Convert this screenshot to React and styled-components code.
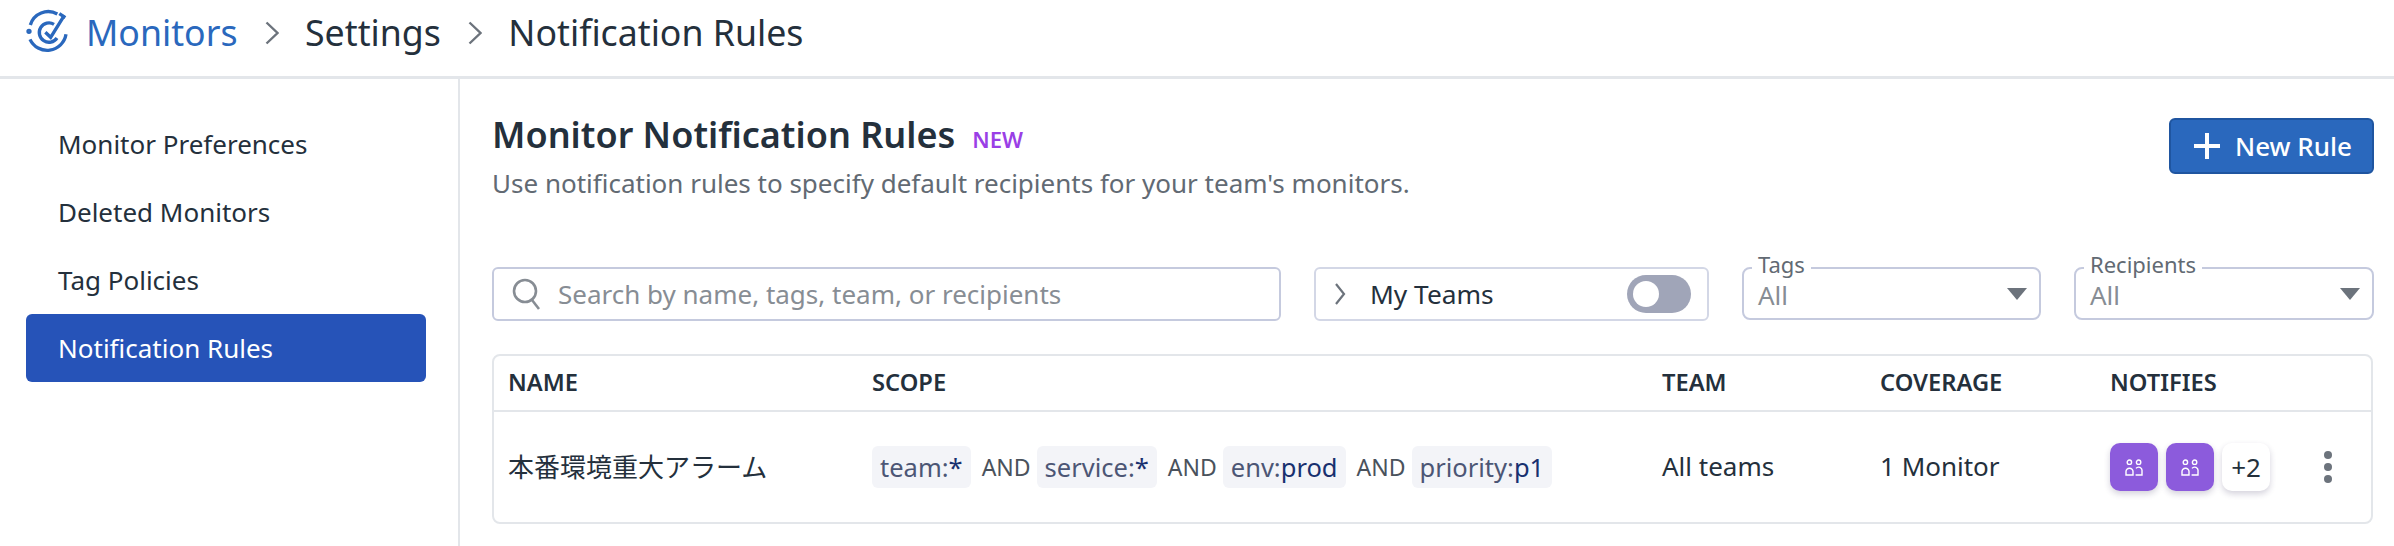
import React from 'react';
import styled, { createGlobalStyle } from 'styled-components';

const GlobalStyle = createGlobalStyle`
    html, body {
        margin: 0;
        padding: 0;
        background: #fff;
    }
    body {
        font-family: "Noto Sans", "Noto Sans CJK JP", sans-serif;
        color: #24303c;
    }
    * {
        box-sizing: border-box;
    }
`;

const Page = styled.div`
    width: 2394px;
    height: 546px;
    overflow: hidden;
    display: flex;
    flex-direction: column;
`;

const Header = styled.header`
    height: 79px;
    flex: none;
    display: flex;
    align-items: center;
    padding: 0 0 12px 20px;
    border-bottom: 3px solid #e3e6ea;
    font-size: 35.7px;
`;

const Crumb = styled.span`
    color: ${(p) => (p.$link ? '#2a68bd' : '#24303c')};
    margin-left: ${(p) => (p.$link ? '12px' : '0')};
`;

const CrumbSep = styled.svg`
    width: 14px;
    height: 24px;
    margin: 2px 26px 0 27.5px;
    fill: none;
    stroke: #6c737c;
    stroke-width: 2.4;
`;

const Body = styled.div`
    flex: 1;
    display: flex;
`;

const Sidebar = styled.nav`
    width: 460px;
    flex: none;
    padding: 31px 32px 0 26px;
    border-right: 2px solid #e3e6ea;
    display: flex;
    flex-direction: column;
`;

const NavItem = styled.a`
    height: 68px;
    padding-left: 32px;
    display: flex;
    align-items: center;
    border-radius: 6px;
    font-size: 26px;
    color: ${(p) => (p.$active ? '#fff' : '#24303c')};
    background: ${(p) => (p.$active ? '#2653b8' : 'transparent')};
`;

const Main = styled.main`
    flex: 1;
    padding: 39px 20px 0 32px;
`;

const TitleRow = styled.div`
    display: flex;
    justify-content: space-between;
    align-items: flex-start;
    height: 149px;
`;

const TitleBlock = styled.div`
    display: flex;
    flex-direction: column;
`;

const Title = styled.h1`
    margin: 0;
    font-size: 36px;
    line-height: 34px;
    font-weight: 600;
    display: flex;
    align-items: baseline;
`;

const NewTag = styled.span`
    margin-left: 17px;
    color: #9a3fe6;
    font-size: 22px;
    font-weight: 600;
`;

const Subtitle = styled.p`
    margin: 10px 0 0;
    font-size: 26px;
    line-height: 34px;
    color: #626a73;
`;

const NewButton = styled.button`
    width: 205px;
    height: 56px;
    border: 2px solid #1f55a0;
    border-radius: 6px;
    background: #2a68bd;
    color: #fff;
    display: flex;
    align-items: center;
    justify-content: center;
    gap: 14px;
    font: 500 26px "Noto Sans", sans-serif;
    padding: 0 0 0 2px;
`;

const Filters = styled.div`
    display: flex;
    align-items: flex-start;
    height: 87px;
`;

const SearchBox = styled.div`
    width: 789px;
    height: 54px;
    border: 2px solid #c5cade;
    border-radius: 6px;
    display: flex;
    align-items: center;
    padding-left: 18px;
    gap: 16px;
    font-size: 26px;
    color: #878d94;
`;

const TeamsBox = styled.div`
    width: 395px;
    height: 54px;
    margin-left: 33px;
    border: 2px solid #d3d7e6;
    border-radius: 6px;
    display: flex;
    align-items: center;
    padding: 0 16px 0 18px;
    font-size: 26.3px;
`;

const TeamsLabel = styled.span`
    margin-left: 24px;
    flex: 1;
`;

const Toggle = styled.span`
    width: 64px;
    height: 38px;
    border-radius: 19px;
    background: #a0a5b8;
    display: flex;
    align-items: center;
    padding-left: 6px;
`;

const Knob = styled.span`
    width: 26px;
    height: 26px;
    border-radius: 50%;
    background: #fff;
`;

const SelectBox = styled.div`
    position: relative;
    width: ${(p) => p.$width}px;
    height: 53px;
    margin-left: 33px;
    border: 2px solid #c5cade;
    border-radius: 8px;
    display: flex;
    align-items: center;
    justify-content: space-between;
    padding: 2px 12px 0 14px;
    font-size: 26px;
    color: #878d94;
`;

const SelectLabel = styled.span`
    position: absolute;
    top: -18px;
    left: 8px;
    padding: 0 6px;
    background: linear-gradient(to bottom, transparent 16px, #fff 16px);
    font-size: 22px;
    line-height: 26px;
    color: #626a73;
`;

const Caret = styled.span`
    width: 0;
    height: 0;
    border-left: 10px solid transparent;
    border-right: 10px solid transparent;
    border-top: 12px solid #6c737c;
    margin-top: -2px;
`;

const Table = styled.div`
    width: 1881px;
    height: 170px;
    border: 2px solid #e3e6ea;
    border-radius: 8px;
`;

const Columns = `
    display: grid;
    grid-template-columns: 364px 790px 218px 230px 1fr;
    padding-left: 14px;
    align-items: center;
`;

const HeadRow = styled.div`
    ${Columns}
    height: 56px;
    padding-bottom: 2px;
    border-bottom: 2px solid #e3e6ea;
    font-size: 23.7px;
    font-weight: 600;
`;

const DataRow = styled.div`
    ${Columns}
    height: 110px;
    font-size: 26px;
`;

const RowText = styled.span`
    margin-top: -2px;
`;

const Scope = styled.div`
    display: flex;
    align-items: center;
    font-size: 25.5px;
`;

const Chip = styled.span`
    height: 42px;
    display: flex;
    align-items: center;
    padding: 0 8px;
    border-radius: 6px;
    background: #f3f4f8;
    color: #4c5675;
`;

const ChipValue = styled.span`
    color: #18306f;
`;

const AndWord = styled.span`
    margin: 0 6px 0 11px;
    font-size: 23px;
    color: #4a525c;
`;

const Notifies = styled.div`
    display: flex;
    align-items: center;
    gap: 8px;
`;

const Avatar = styled.span`
    width: 48px;
    height: 48px;
    border-radius: 10px;
    background: #8c5bdc;
    box-shadow: 0 3px 6px rgba(40, 30, 80, 0.2);
    display: flex;
    align-items: center;
    justify-content: center;
`;

const MoreCount = styled(Avatar)`
    background: #fff;
    color: #24303c;
    font-size: 26px;
`;

const Kebab = styled.span`
    margin-left: 46px;
    display: flex;
    flex-direction: column;
    gap: 4px;
`;

const Dot = styled.span`
    width: 8px;
    height: 8px;
    border-radius: 50%;
    background: #6c737c;
`;

const TeamIcon = () => (
    <svg width="18" height="17" viewBox="0 0 18 17" fill="none" stroke="#fff" strokeWidth="1.4">
        <circle cx="4.4" cy="3.2" r="2.2" />
        <circle cx="13.6" cy="3.2" r="2.2" />
        <path d="M1 16v-3.4a3.4 3.4 0 0 1 3.4-3.4h.2a3.4 3.4 0 0 1 3.4 3.4V16z" />
        <path d="M11 9.4a3.4 3.4 0 0 1 6 2.6V16h-6.4" />
    </svg>
);

const MonitorsLogo = () => (
    <svg width="54" height="54" viewBox="0 0 162 162" fill="none" stroke="#2a68bd" strokeWidth="10">
        <path d="M31 60A56 56 0 0 1 112 27" />
        <path d="M30 103A57 57 0 0 0 138 88" />
        <path d="M102 58A29 29 0 1 0 111 99" />
        <path d="M76 82l16 15L133 31" />
        <path d="M118 26l18 12" />
        <circle cx="27" cy="79" r="3" fill="#2a68bd" />
    </svg>
);

const Chevron = () => (
    <CrumbSep viewBox="0 0 14 24">
        <path d="M1.5 1.5l11 10.5-11 10.5" />
    </CrumbSep>
);

const nav = ['Monitor Preferences', 'Deleted Monitors', 'Tag Policies', 'Notification Rules'];

const scope = [
    ['team:', '*'],
    ['service:', '*'],
    ['env:', 'prod'],
    ['priority:', 'p1']
];

const App = () => (
    <Page>
        <GlobalStyle />
        <Header>
            <MonitorsLogo />
            <Crumb $link>Monitors</Crumb>
            <Chevron />
            <Crumb>Settings</Crumb>
            <Chevron />
            <Crumb>Notification Rules</Crumb>
        </Header>
        <Body>
            <Sidebar>
                {nav.map((item) => (
                    <NavItem key={item} $active={item === 'Notification Rules'}>
                        {item}
                    </NavItem>
                ))}
            </Sidebar>
            <Main>
                <TitleRow>
                    <TitleBlock>
                        <Title>
                            Monitor Notification Rules
                            <NewTag>NEW</NewTag>
                        </Title>
                        <Subtitle>Use notification rules to specify default recipients for your team's monitors.</Subtitle>
                    </TitleBlock>
                    <NewButton>
                        <svg width="28" height="28" viewBox="0 0 28 28" fill="#fff">
                            <path d="M12 1h4v11h11v4H16v11h-4V16H1v-4h11z" />
                        </svg>
                        New Rule
                    </NewButton>
                </TitleRow>
                <Filters>
                    <SearchBox>
                        <svg width="30" height="32" viewBox="0 0 30 32" fill="none" stroke="#878d94" strokeWidth="2.6">
                            <circle cx="13" cy="13" r="11" />
                            <path d="M20 22l7 9" />
                        </svg>
                        Search by name, tags, team, or recipients
                    </SearchBox>
                    <TeamsBox>
                        <svg width="12" height="24" viewBox="0 0 12 24" fill="none" stroke="#6c737c" strokeWidth="2.2">
                            <path d="M2 2l8 10L2 22" />
                        </svg>
                        <TeamsLabel>My Teams</TeamsLabel>
                        <Toggle>
                            <Knob />
                        </Toggle>
                    </TeamsBox>
                    <SelectBox $width={299}>
                        <SelectLabel>Tags</SelectLabel>
                        All
                        <Caret />
                    </SelectBox>
                    <SelectBox $width={300}>
                        <SelectLabel>Recipients</SelectLabel>
                        All
                        <Caret />
                    </SelectBox>
                </Filters>
                <Table>
                    <HeadRow>
                        <span>NAME</span>
                        <span>SCOPE</span>
                        <span>TEAM</span>
                        <span>COVERAGE</span>
                        <span>NOTIFIES</span>
                    </HeadRow>
                    <DataRow>
                        <RowText>本番環境重大アラーム</RowText>
                        <Scope>
                            {scope.map(([key, value], i) => (
                                <React.Fragment key={key}>
                                    {i > 0 && <AndWord>AND</AndWord>}
                                    <Chip>
                                        {key}
                                        <ChipValue>{value}</ChipValue>
                                    </Chip>
                                </React.Fragment>
                            ))}
                        </Scope>
                        <RowText>All teams</RowText>
                        <RowText>1 Monitor</RowText>
                        <Notifies>
                            <Avatar>
                                <TeamIcon />
                            </Avatar>
                            <Avatar>
                                <TeamIcon />
                            </Avatar>
                            <MoreCount>+2</MoreCount>
                            <Kebab>
                                <Dot />
                                <Dot />
                                <Dot />
                            </Kebab>
                        </Notifies>
                    </DataRow>
                </Table>
            </Main>
        </Body>
    </Page>
);

export default App;
